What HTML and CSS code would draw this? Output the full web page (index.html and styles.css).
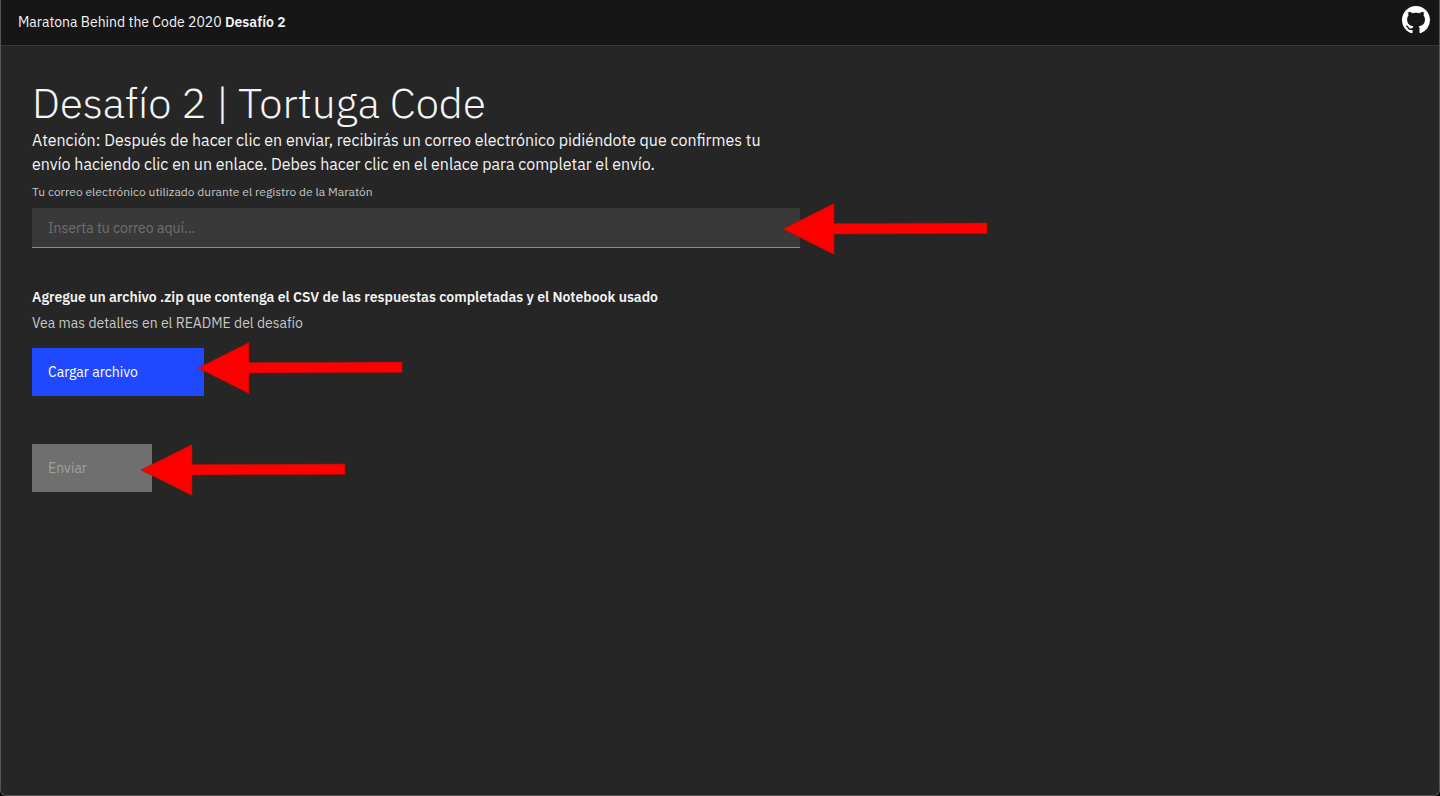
FILE: index.html
```html
<!DOCTYPE html>
<html lang="es">
<head>
<meta charset="utf-8">
<meta name="viewport" content="width=device-width, initial-scale=1">
<title>Maratona Behind the Code 2020 - Desafío 2</title>
<link rel="stylesheet" href="styles.css">
</head>
<body>
<svg class="defs" aria-hidden="true">
  <symbol id="arrow" viewBox="0 0 206 54">
    <path d="M1 27 52 1.500V21.500L205 21V31.500L52 32V52.500Z" fill="#f00" stroke="#a31208" stroke-width=".6"/>
  </symbol>
</svg>
<div class="window">
  <header class="header">
    <a class="brand" href="#">Maratona Behind the Code 2020 <strong>Desafío 2</strong></a>
    <a class="github" href="#" aria-label="GitHub">
      <svg viewBox="0 0 16 16" width="28" height="28" fill="#fff" aria-hidden="true"><path d="M8 0C3.580 0 0 3.580 0 8c0 3.540 2.290 6.530 5.470 7.590.4.070.55-.17.55-.38 0-.19-.01-.82-.01-1.490-2.010.37-2.530-.49-2.690-.94-.09-.23-.48-.94-.82-1.130-.28-.15-.68-.52-.01-.53.63-.01 1.080.58 1.230.82.72 1.210 1.870.87 2.330.66.07-.52.28-.87.51-1.070-1.780-.2-3.640-.89-3.640-3.950 0-.87.31-1.590.82-2.150-.08-.2-.36-1.020.08-2.120 0 0 .67-.21 2.200.82.64-.18 1.320-.27 2-.27s1.360.09 2 .27c1.530-1.040 2.200-.82 2.200-.82.44 1.100.16 1.920.08 2.120.51.56.82 1.270.82 2.150 0 3.070-1.870 3.750-3.650 3.950.29.25.54.73.54 1.480 0 1.070-.01 1.930-.01 2.200 0 .21.15.46.55.38A8.010 8.010 0 0 0 16 8c0-4.420-3.580-8-8-8Z"/></svg>
    </a>
  </header>
  <main class="content">
    <h1 class="title">Desafío 2 | Tortuga Code</h1>
    <p class="notice">Atención: Después de hacer clic en enviar, recibirás un correo electrónico pidiéndote que confirmes tu envío haciendo clic en un enlace. Debes hacer clic en el enlace para completar el envío.</p>
    <form class="form">
      <label class="label" for="email">Tu correo electrónico utilizado durante el registro de la Maratón</label>
      <div class="field">
        <input class="input" id="email" type="email" placeholder="Inserta tu correo aquí...">
        <svg class="arrow arrow-input" aria-hidden="true"><use href="#arrow"/></svg>
      </div>
      <p class="file-title">Agregue un archivo .zip que contenga el CSV de las respuestas completadas y el Notebook usado</p>
      <p class="file-help">Vea mas detalles en el README del desafío</p>
      <div class="action">
        <button class="button upload" type="button">Cargar archivo</button>
        <svg class="arrow arrow-upload" aria-hidden="true"><use href="#arrow"/></svg>
      </div>
      <div class="action">
        <button class="button send" type="submit" disabled>Enviar</button>
        <svg class="arrow arrow-send" aria-hidden="true"><use href="#arrow"/></svg>
      </div>
    </form>
  </main>
</div>
</body>
</html>
```
FILE: styles.css
```css
* { box-sizing: border-box; }
html { background: #000; }
body {
  margin: 0;
  color: #f4f4f4;
  font-family: "IBM Plex Sans", Roboto, sans-serif;
  font-size: 14px;
  line-height: 18px;
}
.defs { position: absolute; width: 0; height: 0; }
.window {
  min-height: 100vh;
  background: #262626;
  border: 1px solid #555;
  border-top: 0;
  border-radius: 0 0 6px 6px;
}
.header {
  display: flex;
  align-items: center;
  justify-content: space-between;
  height: 46px;
  padding: 0 9px 2px 17px;
  background: #161616;
  border-bottom: 1px solid #393939;
}
.brand { color: #f4f4f4; text-decoration: none; }
.brand strong { font-weight: 600; }
.github { display: flex; padding-bottom: 3px; }
.content { padding: 32px 31px; }
.title {
  margin: 0;
  font-size: 42px;
  font-weight: 300;
  line-height: 50px;
}
.notice {
  max-width: 768px;
  margin: 0;
  font-size: 16px;
  line-height: 24px;
}
.form { max-width: 768px; }
.label {
  display: block;
  padding: 8px 0;
  color: #c6c6c6;
  font-size: 12px;
  line-height: 16px;
}
.field { position: relative; display: flex; margin-bottom: 40px; }
.input {
  width: 100%;
  height: 40px;
  padding: 0 16px;
  color: #f4f4f4;
  background: #393939;
  border: 0;
  border-bottom: 1px solid #8d8d8d;
  border-radius: 0;
  font: inherit;
}
.input::placeholder { color: #6f6f6f; opacity: 1; }
.file-title { margin: 0 0 8px; font-weight: 600; }
.file-help { margin: 0 0 16px; color: #c6c6c6; }
.action { position: relative; display: flex; width: max-content; margin-bottom: 48px; }
.button {
  height: 48px;
  padding: 0 64px 0 16px;
  border: 0;
  font: inherit;
  text-align: left;
}
.upload { min-width: 172px; color: #fff; background: #1f48ff; }
.send { min-width: 120px; color: #a0a0a0; background: #6f6f6f; }
.arrow { position: absolute; width: 206px; height: 54px; pointer-events: none; }
.arrow-input { top: -6px; right: -188px; }
.arrow-upload { top: -7px; left: 165px; }
.arrow-send { top: -1px; left: 108px; }
```
